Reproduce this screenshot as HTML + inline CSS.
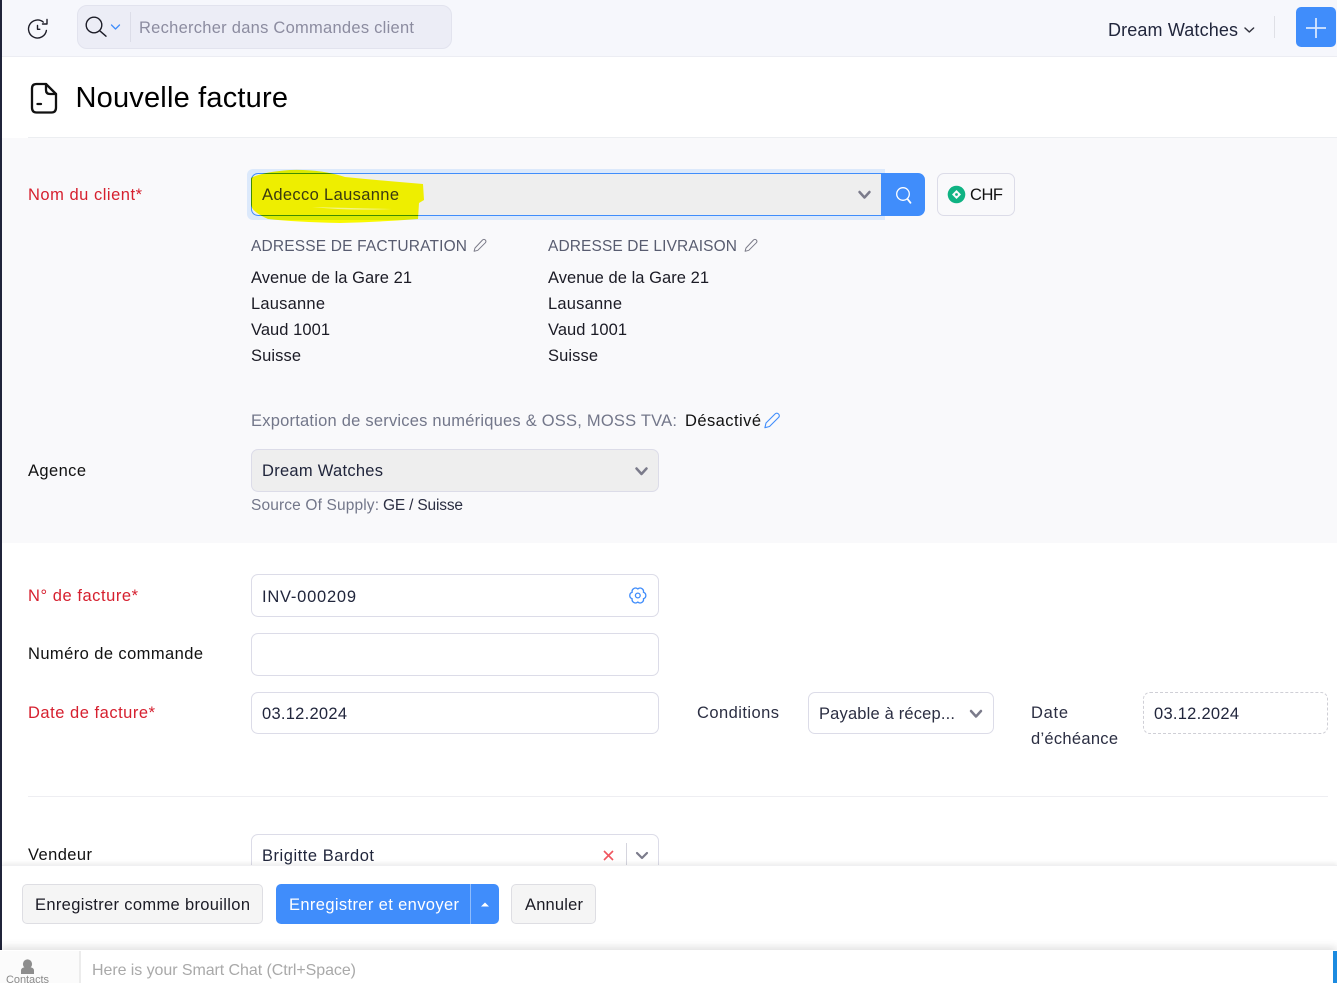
<!DOCTYPE html>
<html lang="fr"><head><meta charset="utf-8"><title>Nouvelle facture</title>
<style>
html,body{margin:0;padding:0;width:1337px;height:983px;overflow:hidden;background:#fff}
body{position:relative;font-family:"Liberation Sans",sans-serif}
.a{position:absolute;box-sizing:border-box}
.box{border:1px solid #dcdce8;border-radius:7px;background:#fff}
svg{position:absolute;left:0;top:0}
text{font-family:"Liberation Sans",sans-serif;font-size:16.5px;fill:#1b1b25}
</style></head><body>
<div class="a" style="left:0;top:0;width:1337px;height:57px;background:#f6f7fc;border-bottom:1px solid #ecedf3"></div>
<div class="a" style="left:77px;top:5px;width:375px;height:44px;background:#ecedf6;border:1px solid #e2e3ee;border-radius:10px"></div>
<div class="a" style="left:130px;top:12px;width:1px;height:30px;background:#dcdde8"></div>
<div class="a" style="left:1296px;top:7px;width:40px;height:40px;background:#408dfb;border-radius:5px"></div>
<div class="a" style="left:1274px;top:16px;width:1px;height:22px;background:#dfe0e6"></div>
<div class="a" style="left:28px;top:137px;width:1309px;height:1px;background:#eceef1"></div>
<div class="a" style="left:2px;top:138px;width:1335px;height:405px;background:#f9f9fb"></div>

<div class="a" style="left:247px;top:169px;width:638px;height:51px;background:#dce9fb;border-radius:6px 0 0 6px"></div>
<div class="a" style="left:251px;top:173px;width:640px;height:43px;background:#eeeeee;border:1px solid #408dfb;border-radius:7px 0 0 7px"></div>
<div class="a" style="left:881px;top:173px;width:44px;height:43px;background:#408dfb;border-radius:0 7px 7px 0"></div>
<div class="a" style="left:937px;top:173px;width:78px;height:43px;border:1px solid #dcdce8;border-radius:7px;background:#f9f9fb"></div>
<div class="a" style="left:251px;top:449px;width:408px;height:43px;background:#eeeeee;border:1px solid #dcdce8;border-radius:7px"></div>
<div class="a box" style="left:251px;top:574px;width:408px;height:43px"></div>
<div class="a box" style="left:251px;top:633px;width:408px;height:43px"></div>
<div class="a box" style="left:251px;top:692px;width:408px;height:42px"></div>
<div class="a box" style="left:808px;top:692px;width:186px;height:42px"></div>
<div class="a" style="left:1143px;top:692px;width:185px;height:42px;border:1px dashed #cfcfd6;border-radius:7px"></div>
<div class="a" style="left:28px;top:796px;width:1300px;height:1px;background:#eeeef2"></div>
<div class="a box" style="left:251px;top:834px;width:408px;height:43px"></div>
<div class="a" style="left:626px;top:843px;width:1px;height:22px;background:#d5d5de"></div>

<div class="a" style="left:2px;top:865px;width:1335px;height:85px;background:#fff;box-shadow:0 -2px 4px rgba(0,0,0,.07)"></div>
<div class="a" style="left:22px;top:884px;width:241px;height:40px;background:#f5f5f5;border:1px solid #dedee3;border-radius:5px"></div>
<div class="a" style="left:276px;top:884px;width:223px;height:40px;background:#408dfb;border-radius:5px"></div>
<div class="a" style="left:470px;top:884px;width:1px;height:40px;background:#8fbcfc"></div>
<div class="a" style="left:511px;top:884px;width:85px;height:40px;background:#f5f5f5;border:1px solid #dedee3;border-radius:5px"></div>

<div class="a" style="left:0;top:0;width:2px;height:950px;background:#20243a"></div>
<div class="a" style="left:0;top:950px;width:1337px;height:33px;background:#fff;box-shadow:0 -3px 8px rgba(0,0,0,.12)"></div>
<div class="a" style="left:0;top:951px;width:81px;height:32px;background:#fbfbfb;border-right:2px solid #ececec"></div>
<div class="a" style="left:1333px;top:951px;width:4px;height:32px;background:#1c8be0"></div>

<svg width="1337" height="983" viewBox="0 0 1337 983" fill="none">
<!-- top bar icons -->
<g stroke="#1d1d28" stroke-width="1.4" stroke-linecap="round" stroke-linejoin="round">
<path d="M43.300 22.100A9 9 0 1 0 46.400 30.500"/><path d="M47 19.500v4.500h-4.500"/><path d="M37.500 25.500v3.800h2.300"/>
<circle cx="94" cy="25" r="7.800"/><path d="M99.800 30.800l6.200 5.400"/>
</g>
<path d="M111.500 25l4 4 4-4" stroke="#408dfb" stroke-width="1.300" stroke-linecap="round" stroke-linejoin="round"/>
<path d="M1245 28l4.300 4 4.300-4" stroke="#33343f" stroke-width="1.500" stroke-linecap="round" stroke-linejoin="round"/>
<path d="M1316 18v20M1306 28h20" stroke="#d8e7fe" stroke-width="1.800"/>
<g stroke="#111" stroke-width="2.300" stroke-linecap="round" stroke-linejoin="round">
<path d="M46 84H36.500Q32 84 32 88.500V107.500Q32 112.500 36.500 112.500H51.500Q56 112.500 56 107.500V94Z"/>
<path d="M46 84V90Q46 94 50 94H56"/><path d="M37.500 104h3.500"/>
</g>

<!-- header text -->
<text x="139" y="33" textLength="275" lengthAdjust="spacing" style="fill:#8c8ca0">Rechercher dans Commandes client</text>
<text x="1108" y="36" textLength="130" lengthAdjust="spacing" style="font-size:18px;fill:#21263c">Dream Watches</text>
<text x="75.500" y="107" textLength="212.500" lengthAdjust="spacing" style="font-size:29px;fill:#000">Nouvelle facture</text>

<!-- form text -->
<text x="28" y="200" textLength="114" lengthAdjust="spacing" style="fill:#d6202f">Nom du client*</text>
<path d="M859.500 192l5 5.500 5-5.500" stroke="#7b7b8b" stroke-width="2.500" stroke-linecap="round" stroke-linejoin="round"/>
<circle cx="903" cy="194" r="6.300" stroke="#fff" stroke-width="1.300"/><path d="M907.500 199l3 3.800" stroke="#fff" stroke-width="1.800" stroke-linecap="round"/>
<circle cx="956.500" cy="194.500" r="8.800" fill="#0fb383"/><path d="M956.500 190l4.500 4.500-4.500 4.500-4.500-4.500Z" fill="#f9f9fb"/><circle cx="956.500" cy="194.500" r="1.400" fill="#0fb383"/>
<text x="970" y="200" textLength="33" lengthAdjust="spacing" style="fill:#111">CHF</text>

<text x="251" y="251" textLength="216" lengthAdjust="spacing" style="fill:#585c70;font-size:15.500px">ADRESSE DE FACTURATION</text>
<text x="548" y="251" textLength="189" lengthAdjust="spacing" style="fill:#585c70;font-size:15.500px">ADRESSE DE LIVRAISON</text>
<g stroke="#7b7b88" stroke-width="1" stroke-linejoin="round">
<path d="M475 248l7.500-8q1.500-1.300 2.800 0t0 2.800l-7.500 7.500-3.700 1Z"/><path d="M746 248l7.500-8q1.500-1.300 2.800 0t0 2.800l-7.500 7.500-3.700 1Z"/>
</g>
<g style="fill:#111">
<text x="251" y="283" textLength="161" lengthAdjust="spacing">Avenue de la Gare 21</text>
<text x="251" y="309" textLength="74" lengthAdjust="spacing">Lausanne</text>
<text x="251" y="335" textLength="79" lengthAdjust="spacing">Vaud 1001</text>
<text x="251" y="361" textLength="50" lengthAdjust="spacing">Suisse</text>
<text x="548" y="283" textLength="161" lengthAdjust="spacing">Avenue de la Gare 21</text>
<text x="548" y="309" textLength="74" lengthAdjust="spacing">Lausanne</text>
<text x="548" y="335" textLength="79" lengthAdjust="spacing">Vaud 1001</text>
<text x="548" y="361" textLength="50" lengthAdjust="spacing">Suisse</text>
</g>
<text x="251" y="426" textLength="426" lengthAdjust="spacing" style="fill:#73778a">Exportation de services numériques &amp; OSS, MOSS TVA:</text>
<text x="685" y="426" textLength="76" lengthAdjust="spacing" style="fill:#111">Désactivé</text>
<path d="M766 423l9-9q1.800-1.700 3.500 0t0 3.500l-9 9-4.600 1.200Z" stroke="#408dfb" stroke-width="1.100" stroke-linejoin="round"/>

<text x="28" y="476" textLength="58" lengthAdjust="spacing" style="fill:#111">Agence</text>
<text x="262" y="476" textLength="121" lengthAdjust="spacing" style="fill:#21263c">Dream Watches</text>
<path d="M636.500 468.500l5 5.500 5-5.500" stroke="#7b7b8b" stroke-width="2.500" stroke-linecap="round" stroke-linejoin="round"/>
<text x="251" y="510" textLength="128" lengthAdjust="spacing" style="fill:#73778a;font-size:15.500px">Source Of Supply:</text>
<text x="383" y="510" textLength="80" lengthAdjust="spacing" style="fill:#2b2e42;font-size:15.500px">GE / Suisse</text>

<text x="28" y="601" textLength="110" lengthAdjust="spacing" style="fill:#d6202f">N° de facture*</text>
<text x="262" y="602" textLength="94" lengthAdjust="spacing" style="fill:#21263c">INV-000209</text>
<path d="M637.800 589A3.400 3.400 0 0 1 643.430 592.250A3.400 3.400 0 0 1 643.430 598.750A3.400 3.400 0 0 1 637.800 602A3.400 3.400 0 0 1 632.170 598.750A3.400 3.400 0 0 1 632.170 592.250A3.400 3.400 0 0 1 637.800 589Z" stroke="#408dfb" stroke-width="1.300" stroke-linejoin="round"/>
<circle cx="637.800" cy="595.500" r="2.400" stroke="#408dfb" stroke-width="1.300"/>
<text x="28" y="659" textLength="175" lengthAdjust="spacing" style="fill:#111">Numéro de commande</text>
<text x="28" y="718" textLength="127" lengthAdjust="spacing" style="fill:#d6202f">Date de facture*</text>
<text x="262" y="719" textLength="85" lengthAdjust="spacing" style="fill:#21263c">03.12.2024</text>
<text x="697" y="718" textLength="82" lengthAdjust="spacing" style="fill:#2b2e42">Conditions</text>
<text x="819" y="719" textLength="136" lengthAdjust="spacing" style="fill:#2b2e42">Payable à récep...</text>
<path d="M971 711l5 5.500 5-5.500" stroke="#7b7b8b" stroke-width="2.500" stroke-linecap="round" stroke-linejoin="round"/>
<text x="1031" y="718" textLength="37" lengthAdjust="spacing" style="fill:#2b2e42">Date</text>
<text x="1031" y="744" textLength="87" lengthAdjust="spacing" style="fill:#2b2e42">d’échéance</text>
<text x="1154" y="719" textLength="85" lengthAdjust="spacing" style="fill:#21263c">03.12.2024</text>

<text x="28" y="860" textLength="64" lengthAdjust="spacing" style="fill:#111">Vendeur</text>
<text x="262" y="861" textLength="112" lengthAdjust="spacing" style="fill:#21263c">Brigitte Bardot</text>
<path d="M604 851l9 9M613 851l-9 9" stroke="#f0555f" stroke-width="1.600"/>
<path d="M637 853l5 5 5-5" stroke="#7b7b8b" stroke-width="2.200" stroke-linecap="round" stroke-linejoin="round"/>

<!-- highlighter -->
<path d="M251 178Q262 172 290 170Q320 169 345 177Q385 181 423 184L424 200L419 203L418 219Q380 222 340 223Q295 222 268 219Q252 212 251 205Z" fill="#ffff00" style="mix-blend-mode:multiply"/>
<path d="M312 207Q350 208 392 209Q350 211 312 207Z" fill="#f3f38a"/>
<text x="262" y="200" textLength="137" lengthAdjust="spacing" style="fill:#3a3a10">Adecco Lausanne</text>

<!-- footer cover above the Vendeur row -->
<rect x="2" y="865" width="1335" height="1" fill="#f0f0f2"/>
<rect x="2" y="866" width="1335" height="14" fill="#fff"/>

<text x="35" y="910" textLength="215" lengthAdjust="spacing" style="fill:#1b1b25">Enregistrer comme brouillon</text>
<text x="289" y="910" textLength="170" lengthAdjust="spacing" style="fill:#fff">Enregistrer et envoyer</text>
<path d="M481 906.500l4-4 4 4Z" fill="#fff"/>
<text x="525" y="910" textLength="58" lengthAdjust="spacing" style="fill:#1b1b25">Annuler</text>

<circle cx="27.500" cy="964" r="4.600" fill="#8d8d8d"/><path d="M21 974v-3.500q0-3.500 6.500-3.500t6.500 3.500V974Z" fill="#8d8d8d"/>
<text x="6" y="983" textLength="43" lengthAdjust="spacing" style="font-size:11px;fill:#8a8a8a">Contacts</text>
<text x="92" y="975" textLength="264" lengthAdjust="spacing" style="font-size:16px;fill:#a9a9a9">Here is your Smart Chat (Ctrl+Space)</text>
</svg>
</body></html>
